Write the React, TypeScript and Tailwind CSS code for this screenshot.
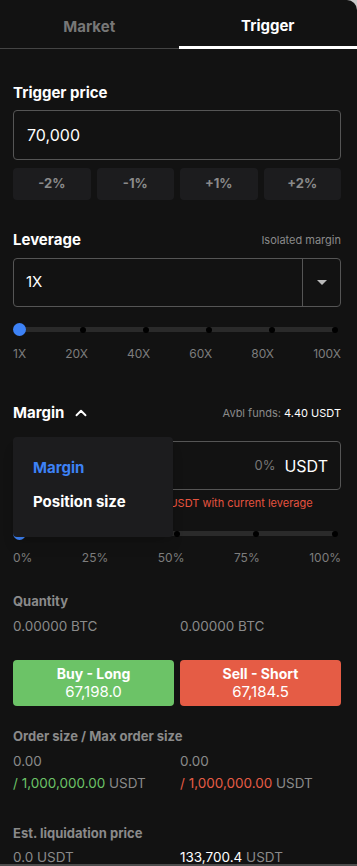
import { ChevronUp } from "lucide-react";

const font = { fontFamily: "Inter, 'Liberation Sans', sans-serif" };

function Slider({ stops, labels }: { stops: number; labels: string[] }) {
  return (
    <div>
      <div className="relative h-[13px] flex items-center">
        <div className="absolute left-[7px] right-[5px] h-[5px] bg-[#2a2a2a] rounded-full" />
        <div className="relative flex w-full justify-between items-center">
          {Array.from({ length: stops }).map((_, i) => (
            <div key={i} className="w-[13px] h-[13px] flex items-center justify-center">
              {i === 0 ? (
                <div className="w-[13px] h-[13px] rounded-full bg-[#3d82f6]" />
              ) : (
                <div className="w-[6px] h-[6px] rounded-full bg-black" />
              )}
            </div>
          ))}
        </div>
      </div>
      <div className="flex justify-between mt-[9px] text-[12px] text-[#7d7d7d]">
        {labels.map((l) => (
          <span key={l}>{l}</span>
        ))}
      </div>
    </div>
  );
}

export default function App() {
  return (
    <div className="bg-[#c9c9c9]" style={font}>
      <div className="bg-[#121212] h-[864px] overflow-hidden rounded-tr-[10px] text-white">
        {/* tabs */}
        <div className="flex h-[49px] border-b border-[#444]">
          <div className="flex-1 flex items-center justify-center text-[15px] font-bold text-[#777] pt-[6px]">Market</div>
          <div className="flex-1 flex items-center justify-center text-[15px] font-bold border-b-[3px] border-white -mb-[1px] pt-[7px]">
            Trigger
          </div>
        </div>

        <div className="pl-[13px] pr-[16px]">
          {/* trigger price */}
          <div className="mt-[34px] text-[15px] font-bold leading-[20px]">Trigger price</div>
          <div className="mt-[7px] h-[50px] border border-[#555] rounded-[4px] flex items-center px-[13px] text-[16px]">
            70,000
          </div>
          <div className="mt-[8px] grid grid-cols-4 gap-[6px]">
            {["-2%", "-1%", "+1%", "+2%"].map((p) => (
              <div key={p} className="h-[32px] rounded-[4px] bg-[#1c1c1e] flex items-center justify-center text-[13px] font-bold text-[#8a8a8a]">
                {p}
              </div>
            ))}
          </div>

          {/* leverage */}
          <div className="mt-[30px] flex justify-between items-center leading-[20px]">
            <span className="text-[15px] font-bold">Leverage</span>
            <span className="text-[11px] text-[#8a8a8a]">Isolated margin</span>
          </div>
          <div className="mt-[8px] h-[49px] border border-[#555] rounded-[4px] flex">
            <div className="flex-1 flex items-center px-[12px] text-[15px]">1X</div>
            <div className="w-[38px] border-l border-[#555] flex items-center justify-center">
              <div className="w-0 h-0 border-l-[5px] border-r-[5px] border-t-[5px] border-l-transparent border-r-transparent border-t-[#bbb]" />
            </div>
          </div>
          <div className="mt-[16px]">
            <Slider stops={6} labels={["1X", "20X", "40X", "60X", "80X", "100X"]} />
          </div>

          {/* margin */}
          <div className="mt-[40px] flex justify-between items-center leading-[20px]">
            <span className="flex items-center gap-[8px] text-[15px] font-bold">
              Margin <ChevronUp size={18} strokeWidth={2.5} />
            </span>
            <span className="text-[11px] text-[#8a8a8a]">
              Avbl funds: <span className="text-white">4.40 USDT</span>
            </span>
          </div>
          <div className="relative">
            <div className="mt-[18px] h-[49px] border border-[#555] rounded-[4px] flex items-center justify-end pr-[12px] gap-[9px]">
              <span className="text-[13px] text-[#777]">0%</span>
              <span className="text-[16px]">USDT</span>
            </div>
            <div className="mt-[5px] text-[11px] text-[#e5533f] leading-[16px] whitespace-nowrap">Maximum order amount: 0.00 USDT with current leverage</div>
            <div className="mt-[16px]">
              <Slider stops={5} labels={["0%", "25%", "50%", "75%", "100%"]} />
            </div>

            <div className="absolute left-0 top-[-4px] w-[160px] h-[100px] bg-[#1c1c1e] rounded-[4px] pl-[20px] pt-[21px] shadow-lg">
              <div className="text-[15px] font-bold text-[#3d82f6] leading-[20px]">Margin</div>
              <div className="mt-[14px] text-[15px] font-bold leading-[20px]">Position size</div>
            </div>
          </div>

          {/* quantity */}
          <div className="mt-[25px] text-[13px] font-bold text-[#8a8a8a] leading-[18px]">Quantity</div>
          <div className="mt-[6px] grid grid-cols-2 gap-[6px] text-[13.5px] text-[#8a8a8a]">
            <span>0.00000 BTC</span>
            <span>0.00000 BTC</span>
          </div>

          {/* buttons */}
          <div className="mt-[24px] grid grid-cols-2 gap-[6px]">
            <div className="h-[46px] rounded-[4px] bg-[#6cc367] flex flex-col items-center justify-center leading-[18px]">
              <span className="text-[14px] font-bold">Buy - Long</span>
              <span className="text-[15px]">67,198.0</span>
            </div>
            <div className="h-[46px] rounded-[4px] bg-[#e55c45] flex flex-col items-center justify-center leading-[18px]">
              <span className="text-[14px] font-bold">Sell - Short</span>
              <span className="text-[15px]">67,184.5</span>
            </div>
          </div>

          {/* order size */}
          <div className="mt-[21px] text-[13px] font-bold text-[#8a8a8a] leading-[18px]">Order size / Max order size</div>
          <div className="mt-[5px] grid grid-cols-2 gap-[6px] text-[13.5px] text-[#8a8a8a] leading-[22px]">
            <div>
              <div>0.00</div>
              <div>
                <span className="text-[#6cc367]">/ 1,000,000.00</span> USDT
              </div>
            </div>
            <div>
              <div>0.00</div>
              <div>
                <span className="text-[#e55c45]">/ 1,000,000.00</span> USDT
              </div>
            </div>
          </div>

          {/* liquidation */}
          <div className="mt-[30px] text-[13px] font-bold text-[#8a8a8a] leading-[18px]">Est. liquidation price</div>
          <div className="mt-[5px] grid grid-cols-2 gap-[6px] text-[13.5px] text-[#8a8a8a]">
            <span>0.0 USDT</span>
            <span>
              <span className="text-white">133,700.4</span> USDT
            </span>
          </div>
        </div>
      </div>
      <div className="h-[2px] bg-[#4d4d4d]" />
    </div>
  );
}
